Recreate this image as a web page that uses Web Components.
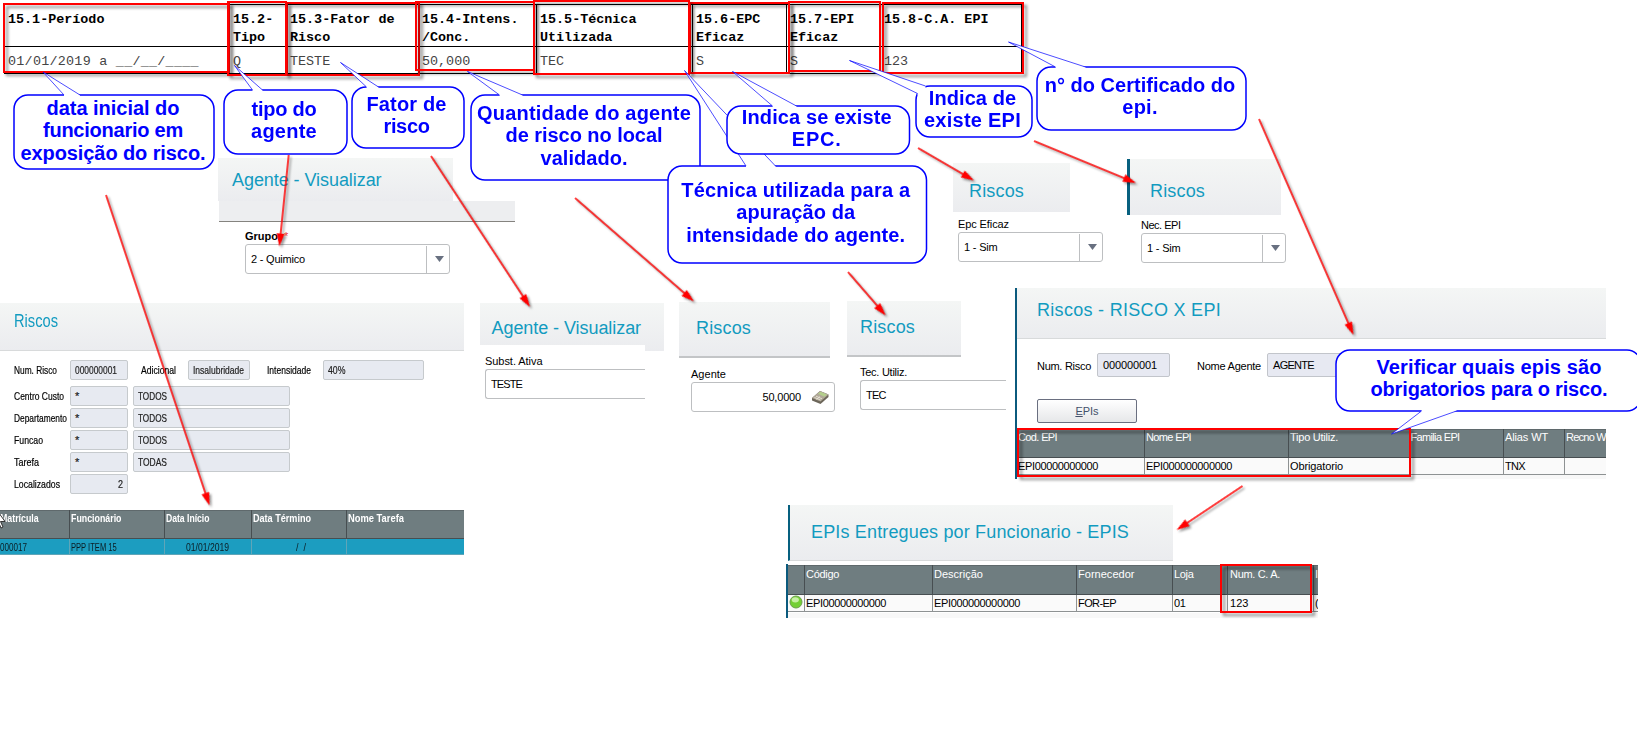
<!DOCTYPE html>
<html lang="pt-BR">
<head>
<meta charset="utf-8">
<title>PPP - Item 15</title>
<style>
body { margin: 0; background: #fff; }
</style>
</head>
<body>
<note-board>
	<!-- PPP section 15 -->
	<snip-shot style="--x:4;--y:4;--w:1018;--h:70">
		<ppp-table>
			<ppp-col w="225" head="15.1-Período" value="01/01/2019 a __/__/____" adv="8.3"></ppp-col>
			<ppp-col w="57" head="15.2-|Tipo" value="Q"></ppp-col>
			<ppp-col w="132" head="15.3-Fator de|Risco" value="TESTE"></ppp-col>
			<ppp-col w="118" head="15.4-Intens.|/Conc." value="50,000"></ppp-col>
			<ppp-col w="156" head="15.5-Técnica|Utilizada" value="TEC"></ppp-col>
			<ppp-col w="94" head="15.6-EPC|Eficaz" value="S"></ppp-col>
			<ppp-col w="94" head="15.7-EPI|Eficaz" value="S"></ppp-col>
			<ppp-col w="141" head="15.8-C.A. EPI" value="123"></ppp-col>
		</ppp-table>
	</snip-shot>

	<!-- Agente: grupo -->
	<snip-shot style="--x:218;--y:158;--w:297;--h:120">
		<snip-title style="--tw:235px;--th:43px;--l:14px;--t:12px"><fit-text w="149.5">Agente - Visualizar</fit-text></snip-title>
		<snip-band></snip-band>
		<form-field combo strong required label="Grupo" lw="33" value="2 - Quimico" vw="54" style="--fw:205px;margin:7px 0 0 27px"></form-field>
	</snip-shot>

	<!-- Riscos: cadastro -->
	<snip-shot style="--x:0;--y:303;--w:464;--h:252">
		<snip-title line style="--th:47px;--l:14px;--t:8px"><fit-text squeeze w="44">Riscos</fit-text></snip-title>
		<risk-form></risk-form>
		<data-grid blue style="margin-top:16px">
			<grid-col w="70" head="Matrícula" hw="38.7" value="000017" vw="27" pad="0"></grid-col>
			<grid-col w="95" head="Funcionário" hw="50.5" value="PPP ITEM 15" vw="45.7" pad="0.5"></grid-col>
			<grid-col w="87" head="Data Início" hw="43.5" value="01/01/2019" vw="43" pad="0.5" vpad="21"></grid-col>
			<grid-col w="95" head="Data Término" hw="58" value="/  /" vw="10" pad="0.5" vpad="44"></grid-col>
			<grid-col w="117" head="Nome Tarefa" hw="56" pad="0.5" last></grid-col>
		</data-grid>
	</snip-shot>

	<!-- Agente: substancia ativa -->
	<snip-shot style="--x:480;--y:303;--w:184;--h:97">
		<snip-title style="--th:48px;--l:11.5px;--t:15px"><fit-text w="149.5">Agente - Visualizar</fit-text></snip-title>
		<snip-cut style="--cw:165px;--ch:54px">
			<form-field open label="Subst. Ativa" lw="57.5" value="TESTE" vw="31" style="--fw:160px;margin:9px 0 0 5px"></form-field>
		</snip-cut>
	</snip-shot>

	<!-- Riscos: intensidade -->
	<snip-shot style="--x:679;--y:302;--w:157;--h:112">
		<snip-title rule style="--tw:151px;--th:54px;--l:17px;--t:16px"><fit-text w="55">Riscos</fit-text></snip-title>
		<form-field calc label="Agente" lw="35" value="50,0000" vw="38.5" style="--fw:144px;margin:9px 0 0 12px"></form-field>
	</snip-shot>

	<!-- Riscos: tecnica -->
	<snip-shot style="--x:847;--y:301;--w:159;--h:112">
		<snip-title rule style="--tw:114px;--th:54px;--l:13px;--t:16px"><fit-text w="55">Riscos</fit-text></snip-title>
		<form-field open label="Tec. Utiliz." lw="47" value="TEC" vw="19.5" style="--fw:146px;margin:8px 0 0 13px"></form-field>
	</snip-shot>

	<!-- Riscos: EPC -->
	<snip-shot style="--x:953;--y:163;--w:151;--h:100">
		<snip-title style="--tw:117px;--th:49px;--l:16px;--t:18px"><fit-text w="55">Riscos</fit-text></snip-title>
		<form-field combo label="Epc Eficaz" lw="51" value="1 - Sim" vw="33.5" style="--fw:145px;margin:5px 0 0 5px"></form-field>
	</snip-shot>

	<!-- Riscos: EPI -->
	<snip-shot style="--x:1127;--y:159;--w:160;--h:106">
		<snip-title bar style="--tw:151px;--th:56px;--l:20px;--t:22px;--bar:3px"><fit-text w="55">Riscos</fit-text></snip-title>
		<form-field combo label="Nec. EPI" lw="39.5" value="1 - Sim" vw="33.5" style="--fw:145px;margin:3px 0 0 14px"></form-field>
	</snip-shot>

	<!-- Riscos - RISCO X EPI -->
	<snip-shot edge style="--x:1015;--y:288;--w:591;--h:191">
		<snip-title line style="--th:50px;--l:20px;--t:12px"><fit-text w="184">Riscos - RISCO X EPI</fit-text></snip-title>
		<epi-form></epi-form>
		<data-grid style="margin-top:6px">
			<grid-col w="128" head="Cod. EPI" hw="39" value="EPI00000000000" vw="80" pad="1"></grid-col>
			<grid-col w="144" head="Nome EPI" hw="45" value="EPI000000000000" vw="86" pad="1"></grid-col>
			<grid-col w="121" head="Tipo Utiliz." hw="48" value="Obrigatorio" vw="53" pad="1"></grid-col>
			<grid-col w="94" head="Familia EPI" hw="49" pad="0.5"></grid-col>
			<grid-col w="61" head="Alias WT" hw="43" value="TNX" vw="20" pad="1"></grid-col>
			<grid-col w="41" head="Recno W" hw="40" pad="1" last></grid-col>
		</data-grid>
	</snip-shot>

	<!-- EPIs entregues -->
	<snip-shot style="--x:788;--y:505;--w:385;--h:56">
		<snip-title bar line style="--tw:383px;--th:55px;--l:21px;--t:17px;--bar:2px"><fit-text w="318">EPIs Entregues por Funcionario - EPIS</fit-text></snip-title>
	</snip-shot>
	<snip-shot edge style="--x:786;--y:564;--w:532;--h:54">
		<data-grid style="margin-top:1px;--hh:30px;--ht:2px">
			<grid-col w="17" ball></grid-col>
			<grid-col w="128" head="Código" hw="33" value="EPI00000000000" vw="80" pad="1"></grid-col>
			<grid-col w="144" head="Descrição" hw="49" value="EPI000000000000" vw="86" pad="1"></grid-col>
			<grid-col w="96" head="Fornecedor" hw="56.5" value="FOR-EP" vw="38" pad="1"></grid-col>
			<grid-col w="55" head="Loja" hw="19.5" value="01" vw="11.5" pad="1"></grid-col>
			<grid-col w="86" head="Num. C. A." hw="50" value="123" vw="18.5" pad="2"></grid-col>
			<grid-col w="4" head="I" hw="3" value="(" vw="3" pad="1" last></grid-col>
		</data-grid>
	</snip-shot>

	<!-- highlights -->
	<mark-frame style="--x:3;--y:3;--w:227;--h:70"></mark-frame>
	<mark-frame style="--x:286;--y:2;--w:134;--h:74"></mark-frame>
	<mark-frame style="--x:227;--y:1;--w:60;--h:75"></mark-frame>
	<mark-frame style="--x:689;--y:2;--w:101;--h:72"></mark-frame>
	<mark-frame style="--x:415;--y:1;--w:120;--h:70"></mark-frame>
	<mark-frame style="--x:533;--y:0;--w:157;--h:75"></mark-frame>
	<mark-frame style="--x:788;--y:1;--w:93;--h:71"></mark-frame>
	<mark-frame style="--x:882;--y:2;--w:142;--h:72"></mark-frame>
	<mark-frame style="--x:1017;--y:428;--w:394;--h:49"></mark-frame>
	<mark-frame style="--x:1220;--y:564;--w:92;--h:49"></mark-frame>

	<!-- arrows -->
	<mark-arrow from="106,195" to="209.5,505.5"></mark-arrow>
	<mark-arrow from="288.7,155" to="279.3,246.5"></mark-arrow>
	<mark-arrow from="431,156" to="530,307"></mark-arrow>
	<mark-arrow from="575,198" to="694,301.5"></mark-arrow>
	<mark-arrow from="848,272" to="885.7,315.5"></mark-arrow>
	<mark-arrow from="918,148" to="974,180.5"></mark-arrow>
	<mark-arrow from="1034,141" to="1136,183"></mark-arrow>
	<mark-arrow from="1259,119" to="1353.5,335"></mark-arrow>
	<mark-arrow from="1242.5,486" to="1176.5,530"></mark-arrow>

	<!-- balloons: box = x,y,w,h; tail = base, tip, base -->
	<note-balloon box="14,95,200,74" tail="64,95 43,72 80,95" pad="2"><fit-text w="133">data inicial do</fit-text><fit-text w="140">funcionario em</fit-text><fit-text w="185">exposição do risco.</fit-text></note-balloon>
	<note-balloon box="223.5,89.5,123,64" tail="252,89.5 234,65 262,89.5" pad="8"><fit-text w="65">tipo do</fit-text><fit-text w="66">agente</fit-text></note-balloon>
	<note-balloon box="351.5,86.5,112,61" tail="366,86.5 340,62 378,86.5" pad="6.5"><fit-text w="80">Fator de</fit-text><fit-text w="46">risco</fit-text></note-balloon>
	<note-balloon box="470.5,94.5,229,85" tail="499,94.5 467,71 522,94.5" pad="7.5"><fit-text w="214">Quantidade do agente</fit-text><fit-text w="157">de risco no local</fit-text><fit-text w="87">validado.</fit-text></note-balloon>
	<note-balloon box="667.5,165.5,258.5,97" tail="745.5,165.5 684,70 775,165.5" pad="13.5"><fit-text w="229">Técnica utilizada para a</fit-text><fit-text w="119">apuração da</fit-text><fit-text w="219">intensidade do agente.</fit-text></note-balloon>
	<note-balloon box="726.5,105.5,182.5,48" tail="772,105.5 732,71 796,105.5" pad="0"><fit-text w="150">Indica se existe</fit-text><fit-text w="50">EPC.</fit-text></note-balloon>
	<note-balloon box="915.5,85.5,116,51" tail="917,93 849,60 925,85.5" pad="1"><fit-text w="87.5">Indica de</fit-text><fit-text w="97">existe EPI</fit-text></note-balloon>
	<note-balloon box="1036.5,66.5,209,63" tail="1055,66.5 1008,41.5 1085,66.5" pad="7"><fit-text w="190.5">n° do Certificado do</fit-text><fit-text w="35.5">epi.</fit-text></note-balloon>
	<note-balloon box="1335.5,349.5,305,61" tail="1421,410.5 1391,433.5 1456,410.5" pad="6" shift="1"><fit-text w="225">Verificar quais epis são</fit-text><fit-text w="237">obrigatorios para o risco.</fit-text></note-balloon>

	<mouse-pointer></mouse-pointer>
</note-board>

<script>
function shadow(el, html) {
	const t = document.createElement("template");
	t.innerHTML = html;
	const root = el.attachShadow({ mode: "open" });
	root.appendChild(t.content.cloneNode(true));
	return root;
}

const PLACE = `position: absolute;
	left: calc(var(--x) * 1px);
	top: calc(var(--y) * 1px);
	width: calc(var(--w) * 1px);
	height: calc(var(--h) * 1px);
	box-sizing: border-box;`;

class NoteBoard extends HTMLElement {
	constructor() {
		super();
		shadow(this, `<style>
:host {
	display: block;
	position: relative;
	width: 1637px;
	height: 736px;
	overflow: hidden;
	background: #fff;
	color: #000;
	font: 11px/14px "Liberation Sans", Arial, sans-serif;
}
</style><slot></slot>`);
	}
}

class SnipShot extends HTMLElement {
	constructor() {
		super();
		shadow(this, `<style>
:host { ${PLACE} overflow: hidden; display: flex; flex-direction: column; align-items: flex-start; }
:host([edge]) { border-left: 2px solid #0b5a7d; background: linear-gradient(#fff, #fff 90%, #f8f8f8 90%); }
</style><slot></slot>`);
	}
}

class SnipTitle extends HTMLElement {
	constructor() {
		super();
		shadow(this, `<style>
:host {
	display: block;
	box-sizing: content-box;
	width: var(--tw, 100%);
	height: var(--th);
	flex: none;
	background: linear-gradient(#f4f6f5, #ebecef);
	color: #129bc0;
	font-size: 18px;
	line-height: 20px;
}
:host([line]) { border-bottom: 1px solid #d8dadb; }
:host([rule]) { border-bottom: 2px solid #c3c5c7; }
:host([bar]) { border-left: var(--bar) solid #07607f; }
div { padding: var(--t) 0 0 var(--l); }
</style><div><slot></slot></div>`);
	}
}

class SnipBand extends HTMLElement {
	constructor() {
		super();
		shadow(this, `<style>
:host { display: block; width: 296px; height: 20px; margin-left: 1px; flex: none; background: #edeef0; border-bottom: 1px solid #85837f; }
</style>`);
	}
}

// white piece that overlaps the lower part of a title strip
class SnipCut extends HTMLElement {
	constructor() {
		super();
		shadow(this, `<style>
:host { display: block; width: var(--cw); height: var(--ch); margin-top: -6px; background: #fff; }
</style><slot></slot>`);
	}
}

class PppTable extends HTMLElement {
	constructor() {
		super();
		shadow(this, `<style>
:host {
	display: flex;
	box-sizing: border-box;
	width: 100%;
	height: 70px;
	border: 1px solid #000;
	border-width: 1px 0 1px 1px;
	font: 13.4px/18px "Liberation Mono", "Courier New", monospace;
}
</style><slot></slot>`);
	}
}

class PppCol extends HTMLElement {
	constructor() {
		super();
		const lines = this.getAttribute("head").split("|").map(s => `<div>${s}</div>`).join("");
		shadow(this, `<style>
:host { display: flex; flex-direction: column; flex: none; box-sizing: border-box; width: ${this.getAttribute("w")}px; border-right: 1px solid #000; white-space: pre; }
.head { box-sizing: border-box; height: 42px; padding: 6px 0 0 3px; border-bottom: 1px solid #000; font-weight: bold; }
.val { padding: 6px 0 0 3px; color: #444; letter-spacing: ${this.hasAttribute("adv") ? 0.26 : 0}px; }
</style><div class="head">${lines}</div><div class="val">${this.getAttribute("value")}</div>`);
	}
}

const CALC = `<svg width="19" height="16" viewBox="0 0 19 16">
	<path d="M1 9 9 2l8.500 3.500v2.500L9.500 15 1 11.500z" fill="#6c665a"/>
	<path d="M1 9 9 2l8.500 3.500L9.500 12.500z" fill="#b1a998"/>
	<path d="M7 4.700 9.500 2.700l6.500 2.800-2.500 2.200z" fill="#b4cf8c"/>
	<path d="M3.500 8.500l6 2.500M5 7.200l6 2.600M5.500 10.500l3.500-3" stroke="#eee9dd" stroke-width=".8"/>
</svg>`;

class FormField extends HTMLElement {
	constructor() {
		super();
		const a = n => this.getAttribute(n);
		const star = this.hasAttribute("required") ? `<i>*</i>` : "";
		const combo = this.hasAttribute("combo") ? `<span class="drop"><svg width="9" height="6"><path d="M0 0h9L4.500 6z" fill="#687080"/></svg></span>` : "";
		const calc = this.hasAttribute("calc") ? CALC : "";
		shadow(this, `<style>
:host { display: block; flex: none; width: var(--fw); }
.label { display: flex; gap: 6px; height: 14px; margin-bottom: 1px; }
:host([strong]) .label { font-weight: bold; }
i { color: #e33; font-style: normal; font-weight: normal; }
.box {
	display: flex;
	align-items: center;
	box-sizing: border-box;
	height: 30px;
	padding-left: 5px;
	border: 1px solid #bdbfc1;
	border-radius: 3px;
}
:host([open]) .box { border-right: 0; border-radius: 3px 0 0 3px; }
:host([calc]) .box { justify-content: flex-end; gap: 10px; padding-right: 4px; }
.drop { display: flex; align-items: center; justify-content: center; width: 22px; height: 27px; margin-left: auto; border-left: 1px solid #bdbfc1; }
.drop svg { margin-left: 3px; }
</style>
<div class="label"><fit-text w="${a("lw")}">${a("label")}</fit-text>${star}</div>
<div class="box"><fit-text w="${a("vw")}">${a("value")}</fit-text>${combo}${calc}</div>`);
	}
}

class RiskForm extends HTMLElement {
	constructor() {
		super();
		const rows = [
			["Centro Custo", 50, "TODOS"],
			["Departamento", 53, "TODOS"],
			["Funcao", 29, "TODOS"],
			["Tarefa", 25, "TODAS"]
		].map(r => `<div class="row"><label><fit-text squeeze w="${r[1]}">${r[0]}</fit-text></label><span class="in code">*</span><span class="in desc"><fit-text squeeze w="29">${r[2]}</fit-text></span></div>`).join("");
		shadow(this, `<style>
:host { display: flex; flex-direction: column; gap: 2px; padding: 9px 0 0 14px; flex: none; -webkit-text-stroke: .2px; }
.row { display: flex; align-items: center; height: 20px; }
.first { margin-bottom: 4px; }
label { width: 56px; margin-top: -1px; }
.in { display: flex; align-items: center; box-sizing: border-box; height: 20px; padding: 0 4px; border: 1px solid #c6cacd; border-radius: 2px; background: #e7eaf1; color: #222; }
.code { width: 58px; }
.desc { width: 157px; margin-left: 5px; }
.num { justify-content: flex-end; }
</style>
<div class="row first">
	<label><fit-text squeeze w="43">Num. Risco</fit-text></label><span class="in code"><fit-text squeeze w="42">000000001</fit-text></span>
	<label style="width:47px;margin-left:13px"><fit-text squeeze w="35">Adicional</fit-text></label><span class="in" style="width:62px"><fit-text squeeze w="51">Insalubridade</fit-text></span>
	<label style="width:56px;margin-left:17px"><fit-text squeeze w="44">Intensidade</fit-text></label><span class="in" style="width:101px"><fit-text squeeze w="17.5">40%</fit-text></span>
</div>
${rows}
<div class="row"><label><fit-text squeeze w="46">Localizados</fit-text></label><span class="in code num"><fit-text squeeze w="5">2</fit-text></span></div>`);
	}
}

class EpiForm extends HTMLElement {
	constructor() {
		super();
		shadow(this, `<style>
:host { display: flex; flex-direction: column; gap: 22px; padding: 14px 0 0 20px; flex: none; }
.row { display: flex; align-items: center; }
.in { display: flex; align-items: center; box-sizing: border-box; height: 24px; padding-left: 5px; border: 1px solid #c2c5cb; border-radius: 2px; background: #e7e9f2; }
.row > fit-text { padding-top: 1px; }
button {
	box-sizing: border-box;
	width: 100px;
	height: 24px;
	padding: 0;
	border: 1px solid #6a6f80;
	border-radius: 2px;
	background: linear-gradient(#fff, #e6e7e9);
	color: #44506a;
	font: inherit;
}
</style>
<div class="row">
	<fit-text w="54" style="margin-right:6px">Num. Risco</fit-text><span class="in" style="width:73px"><fit-text w="54">000000001</fit-text></span>
	<fit-text w="64" style="margin:0 6px 0 27px">Nome Agente</fit-text><span class="in" style="width:160px"><fit-text w="41">AGENTE</fit-text></span>
</div>
<button><u>E</u>PIs</button>`);
	}
}

class DataGrid extends HTMLElement {
	constructor() {
		super();
		shadow(this, `<style>
:host {
	display: flex;
	width: 100%;
	flex: none;
	--row: #fafafa;
	--row-line: #8e9293;
	--row-text: #000;
}
:host([blue]) { --row: #1c9dc0; --row-line: #5fa5b8; --row-text: #0b1d24; --hh: 29px; --rh: 16px; }
</style><slot></slot>`);
	}
}

class GridCol extends HTMLElement {
	constructor() {
		super();
		const a = (n, d = "") => this.getAttribute(n) || d;
		const squeeze = this.closest("data-grid").hasAttribute("blue") ? "squeeze" : "";
		const cell = (text, w) => text ? `<fit-text ${squeeze} w="${w}">${text}</fit-text>` : "";
		const ball = this.hasAttribute("ball") ? `<svg width="15" height="14" viewBox="0 0 15 14">
	<circle cx="8" cy="7" r="6" fill="#74cf35" stroke="#6aa04a"/>
	<ellipse cx="7.300" cy="4.800" rx="3.600" ry="2.600" fill="#d6f5b9" opacity=".85"/>
</svg>` : "";
		shadow(this, `<style>
:host { display: block; flex: none; width: ${a("w")}px; overflow: hidden; }
.head, .val { box-sizing: border-box; white-space: pre; overflow: hidden; border-right: 1px solid #474e51; }
.head { height: var(--hh, 29px); padding: var(--ht, 1px) 0 0 ${a("pad", "0")}px; background: #6f7d80; color: #fff; border-bottom: 1px solid #474e51; box-shadow: inset 0 1px #5f696c; ${squeeze ? "font-weight:bold;" : ""} }
.val { height: var(--rh, 17px); padding: 1px 0 0 ${a("vpad", a("pad", "0"))}px; background: var(--row); color: var(--row-text); border-color: var(--row-line); border-bottom: 1px solid var(--row-line); line-height: 14px; }
:host([last]) .head, :host([last]) .val { border-right: 0; }
:host([ball]) .val { padding-top: 0; }
svg { display: block; }
</style><div class="head">${cell(a("head"), a("hw"))}</div><div class="val">${cell(a("value"), a("vw"))}${ball}</div>`);
	}
}

class MarkFrame extends HTMLElement {
	constructor() {
		super();
		shadow(this, `<style>
:host { ${PLACE} border: 2px solid #f00; filter: drop-shadow(3px 3px 1.5px rgba(0,0,0,.45)); }
</style>`);
	}
}

const LAYER = `:host { position: absolute; left: 0; top: 0; pointer-events: none; }
svg { display: block; overflow: visible; }`;

class MarkArrow extends HTMLElement {
	constructor() {
		super();
		const [x1, y1] = this.getAttribute("from").split(",").map(Number);
		const [x2, y2] = this.getAttribute("to").split(",").map(Number);
		const len = Math.hypot(x2 - x1, y2 - y1);
		const ang = Math.atan2(y2 - y1, x2 - x1) * 180 / Math.PI;
		shadow(this, `<style>${LAYER}
svg { filter: drop-shadow(2px 2px 1px rgba(0,0,0,.4)); }</style>
<svg width="1" height="1"><g transform="translate(${x1} ${y1}) rotate(${ang})" fill="#f00">
	<path d="M0 0H${len - 8}" stroke="#f00" stroke-width="1.700"/>
	<path d="M${len} 0l-13 -4v8z"/>
</g></svg>`);
	}
}

class NoteBalloon extends HTMLElement {
	constructor() {
		super();
		const [x, y, w, h] = this.getAttribute("box").split(",").map(Number);
		const [a, tip, b] = this.getAttribute("tail").split(" ").map(p => p.split(",").map(Number)).map(p => [p[0] - x, p[1] - y]);
		// the tail runs a little into the box so that its base hides the border
		const dy = tip[1] < 0 ? 2 : -2;
		shadow(this, `<style>
:host { position: absolute; left: ${x}px; top: ${y}px; width: ${w}px; height: ${h}px; color: #00f; font-size: 20px; font-weight: bold; line-height: 22.4px; }
svg { position: absolute; left: 0; top: 0; overflow: visible; }
.text { position: relative; left: ${this.getAttribute("shift") || -1}px; display: flex; flex-direction: column; align-items: center; padding-top: ${this.getAttribute("pad")}px; }
</style>
<svg width="${w}" height="${h}">
	<rect width="${w}" height="${h}" rx="14" fill="#fff" stroke="#00f" stroke-width="1.500"/>
	<path d="M${a}L${tip}L${b}l0 ${dy}L${a[0]} ${a[1] + dy}z" fill="#fff"/>
	<path d="M${a}L${tip}L${b}" fill="none" stroke="#00f" stroke-width=".700"/>
</svg>
<div class="text"><slot></slot></div>`);
	}
}

class MousePointer extends HTMLElement {
	constructor() {
		super();
		shadow(this, `<style>
:host { position: absolute; left: 0; top: 513px; }
svg { display: block; }
</style><svg width="6" height="16"><path d="M-4 -4V12l2.500-3 2.500 6 2-1-2.500-5.500H5z" fill="#fff" stroke="#222" stroke-width=".9"/></svg>`);
	}
}

// one line of text set to a given width, by tracking or (squeeze) by scaling
class FitText extends HTMLElement {
	constructor() {
		super();
		this.root = shadow(this, `<style>
:host { display: inline-block; vertical-align: top; white-space: pre; flex: none; }
span { display: inline-block; transform-origin: 0 0; }
</style><span><slot></slot></span>`);
	}
	connectedCallback() {
		const w = Number(this.getAttribute("w"));
		const span = this.root.querySelector("span");
		const natural = span.getBoundingClientRect().width;
		this.style.width = w + "px";
		if (this.hasAttribute("squeeze")) {
			span.style.transform = `scaleX(${w / natural})`;
		} else {
			span.style.letterSpacing = (w - natural) / this.textContent.length + "px";
		}
	}
}

customElements.define("note-board", NoteBoard);
customElements.define("snip-shot", SnipShot);
customElements.define("snip-title", SnipTitle);
customElements.define("snip-band", SnipBand);
customElements.define("snip-cut", SnipCut);
customElements.define("ppp-table", PppTable);
customElements.define("ppp-col", PppCol);
customElements.define("form-field", FormField);
customElements.define("risk-form", RiskForm);
customElements.define("epi-form", EpiForm);
customElements.define("data-grid", DataGrid);
customElements.define("grid-col", GridCol);
customElements.define("mark-frame", MarkFrame);
customElements.define("mark-arrow", MarkArrow);
customElements.define("note-balloon", NoteBalloon);
customElements.define("mouse-pointer", MousePointer);
customElements.define("fit-text", FitText);
</script>
</body>
</html>
